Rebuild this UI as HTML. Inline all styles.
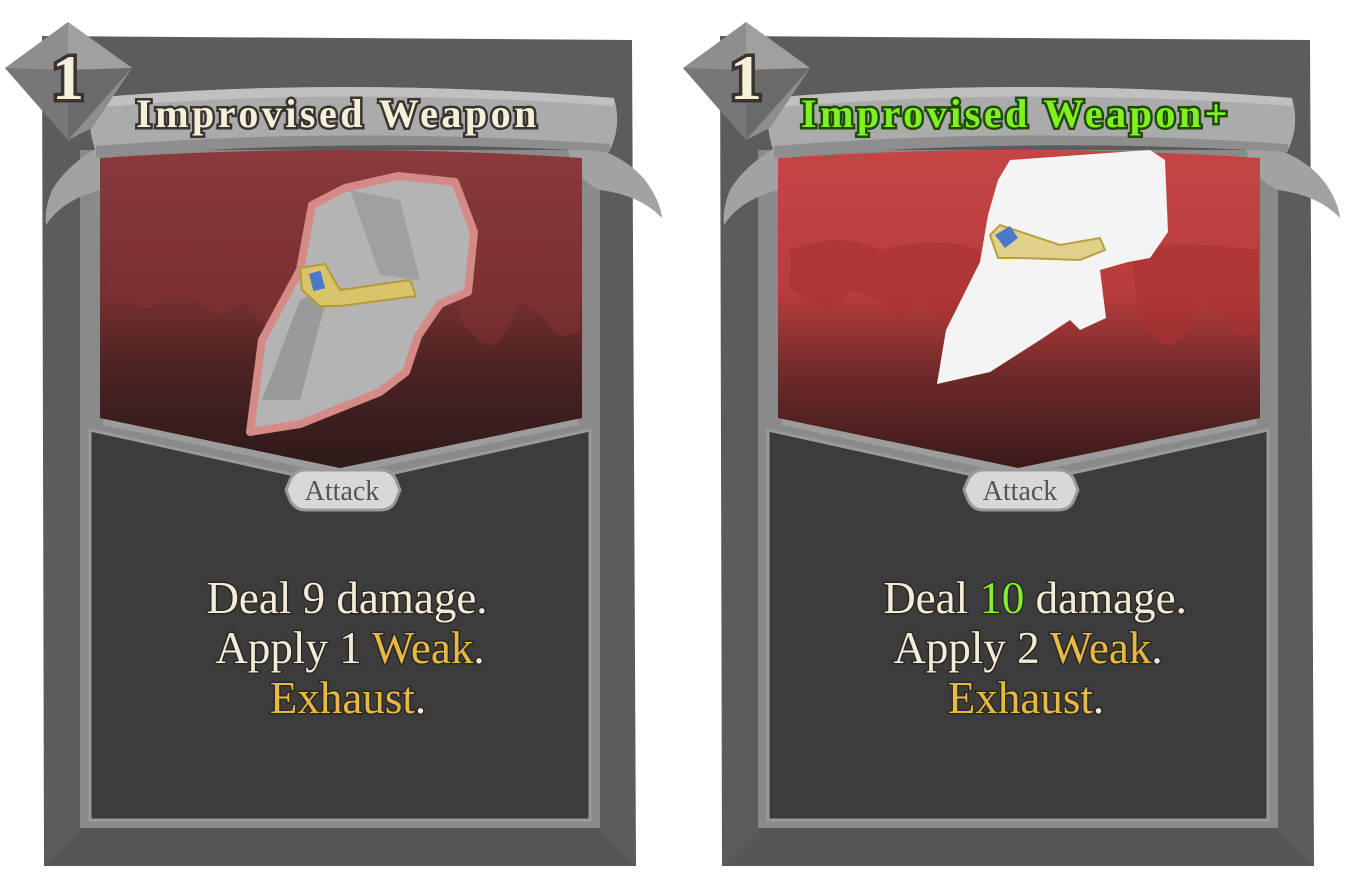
<!DOCTYPE html>
<html><head><meta charset="utf-8"><style>
html,body{margin:0;padding:0;background:#fff;}
svg{display:block}
.t{font-family:"Liberation Serif",serif;}
</style></head><body>
<svg width="1356" height="874" viewBox="0 0 1356 874" xmlns="http://www.w3.org/2000/svg">
<defs>
<linearGradient id="r1" x1="0" y1="0" x2="0" y2="1">
<stop offset="0" stop-color="#8a3a3a"/><stop offset="0.45" stop-color="#7a3030"/><stop offset="0.7" stop-color="#4a2222"/><stop offset="1" stop-color="#2e1a1a"/></linearGradient>
<linearGradient id="r2" x1="0" y1="0" x2="0" y2="1">
<stop offset="0" stop-color="#c54545"/><stop offset="0.45" stop-color="#b83c3c"/><stop offset="0.7" stop-color="#702a2a"/><stop offset="1" stop-color="#3a1a1a"/></linearGradient>
<g id="frame">
<path d="M42,36 L632,40 L636,866 L44,866 Z" fill="#5c5c5c"/>
<path d="M44,866 L90,820 L590,820 L636,866 Z" fill="#565656"/>
<path d="M80,150 L600,150 L600,828 L80,828 Z" fill="#8a8a8a"/>
<path d="M90,430 L340,485 L590,430 L590,820 L90,820 Z" fill="#3c3c3c" stroke="#9a9a9a" stroke-width="3"/>
<path d="M104,420 L340,470 L578,420" fill="none" stroke="#9c9c9c" stroke-width="10"/>
<!-- tails -->
<path d="M112,140 Q70,160 52,190 Q44,210 46,225 Q62,200 100,190 Q118,175 112,140 Z" fill="#a2a2a2"/>
<path d="M566,140 Q620,150 645,180 Q660,200 662,218 Q640,195 600,190 Q572,178 566,140 Z" fill="#a2a2a2"/>
<!-- banner -->
<path d="M92,98 Q340,76 614,98 Q622,125 610,150 Q340,130 96,152 Q86,125 92,98 Z" fill="#ababab"/>
<path d="M92,98 Q340,76 614,98 L614,106 Q340,86 92,108 Z" fill="#c0c0c0"/>
<path d="M96,146 Q340,126 610,144 L610,152 Q340,136 96,158 Z" fill="#8e8e8e"/>
<!-- energy -->
<path d="M68,22 L132,68 L92,128 L68,140 L5,68 Z" fill="#8e8e8e"/>
<path d="M68,22 L132,68 L68,70 Z" fill="#a0a0a0"/>
<path d="M5,68 L68,70 L68,140 Z" fill="#777"/>
<path d="M68,70 L132,68 L68,140 Z" fill="#6a6a6a"/>
</g>
</defs>

<!-- Card 1 -->
<use href="#frame"/>
<path d="M100,158 Q340,142 582,158 L582,418 L340,468 L100,418 Z" fill="url(#r1)"/>
<path d="M110,250 Q160,230 200,250 Q260,235 300,250 L300,330 Q285,345 270,330 L240,300 Q220,330 200,300 L170,290 Q150,320 130,300 L110,290 Z" fill="#803232" opacity="0.6"/>
<path d="M452,250 Q500,240 580,250 L580,330 Q560,345 545,320 L520,300 Q500,360 478,340 L460,320 Z" fill="#803232" opacity="0.6"/>
<path d="M250,432 L262,340 L300,270 L312,205 L345,188 L398,176 L455,182 L474,232 L468,292 L440,304 L418,336 L406,372 L380,392 L300,424 Z" fill="#b4b4b4" stroke="#d48a86" stroke-width="8" stroke-linejoin="round"/>
<path d="M262,400 L300,300 L330,285 L300,400 Z" fill="#9a9a9a"/>
<path d="M350,190 L400,200 L420,280 L380,275 Z" fill="#a0a0a0"/>
<path d="M300,268 L325,264 L340,290 L410,280 L416,296 L340,306 L320,306 L302,290 Z" fill="#d9c46a" stroke="#b39a3a" stroke-width="2"/>
<rect x="311" y="272" width="12" height="18" fill="#4a78cc" transform="rotate(-15 317 281)"/>

<text class="t" x="338" y="127" text-anchor="middle" font-size="40" font-weight="bold" letter-spacing="3.5" fill="#f6efda" stroke="#3a3430" stroke-width="5" paint-order="stroke">Improvised Weapon</text>
<text class="t" x="68" y="99" text-anchor="middle" font-size="64" font-weight="bold" fill="#f6efda" stroke="#3a3430" stroke-width="7" paint-order="stroke">1</text>

<path d="M290,480 Q295,470 305,470 L380,470 Q392,470 396,480 L400,490 L396,500 Q392,510 380,510 L305,510 Q295,510 290,500 L286,490 Z" fill="#d8d8d8" stroke="#9a9a9a" stroke-width="3"/>
<text class="t" x="342" y="500" text-anchor="middle" font-size="28" fill="#555">Attack</text>

<g class="t" font-size="45" text-anchor="middle" stroke="#2b2824" stroke-width="3" paint-order="stroke">
<text x="347" y="613" fill="#f3ecd8">Deal 9 damage.</text>
<text x="350" y="663" fill="#f3ecd8">Apply 1 <tspan fill="#e8b845">Weak</tspan>.</text>
<text x="348" y="713" fill="#e8b845">Exhaust<tspan fill="#f3ecd8">.</tspan></text>
</g>

<!-- Card 2 -->
<use href="#frame" transform="translate(678,0)"/>
<path d="M778,158 Q1018,142 1260,158 L1260,418 L1018,468 L778,418 Z" fill="url(#r2)"/>
<path d="M790,250 Q840,230 880,250 Q940,235 980,250 L980,330 Q965,345 950,330 L920,300 Q900,330 880,300 L850,290 Q830,320 810,300 L790,290 Z" fill="#a83232" opacity="0.6"/>
<path d="M1130,250 Q1180,240 1258,250 L1258,330 Q1240,345 1225,320 L1200,300 Q1180,360 1158,340 L1140,320 Z" fill="#a83232" opacity="0.6"/>
<path d="M937,384 L946,330 L980,262 L988,215 L998,180 L1010,160 L1150,150 L1165,160 L1168,232 L1150,258 L1128,262 L1100,270 L1106,318 L1080,330 L1070,320 L1040,340 L990,372 Z" fill="#f4f4f4"/>
<path d="M990,235 L1000,225 L1060,245 L1100,238 L1105,250 L1080,260 L1020,258 L998,258 Z" fill="#e0d08a" stroke="#b8a040" stroke-width="2"/>
<path d="M995,235 L1010,226 L1018,238 L1005,248 Z" fill="#4a78cc"/>

<text class="t" x="1016" y="127" text-anchor="middle" font-size="40" font-weight="bold" letter-spacing="3.5" fill="#80f020" stroke="#1f4a08" stroke-width="5" paint-order="stroke">Improvised Weapon+</text>
<text class="t" x="746" y="99" text-anchor="middle" font-size="64" font-weight="bold" fill="#f6efda" stroke="#3a3430" stroke-width="7" paint-order="stroke">1</text>

<path d="M968,480 Q973,470 983,470 L1058,470 Q1070,470 1074,480 L1078,490 L1074,500 Q1070,510 1058,510 L983,510 Q973,510 968,500 L964,490 Z" fill="#d8d8d8" stroke="#9a9a9a" stroke-width="3"/>
<text class="t" x="1020" y="500" text-anchor="middle" font-size="28" fill="#555">Attack</text>

<g class="t" font-size="45" text-anchor="middle" stroke="#2b2824" stroke-width="3" paint-order="stroke">
<text x="1035" y="613" fill="#f3ecd8">Deal <tspan fill="#7fef30">10</tspan> damage.</text>
<text x="1028" y="663" fill="#f3ecd8">Apply 2 <tspan fill="#e8b845">Weak</tspan>.</text>
<text x="1026" y="713" fill="#e8b845">Exhaust<tspan fill="#f3ecd8">.</tspan></text>
</g>
</svg>
</body></html>
